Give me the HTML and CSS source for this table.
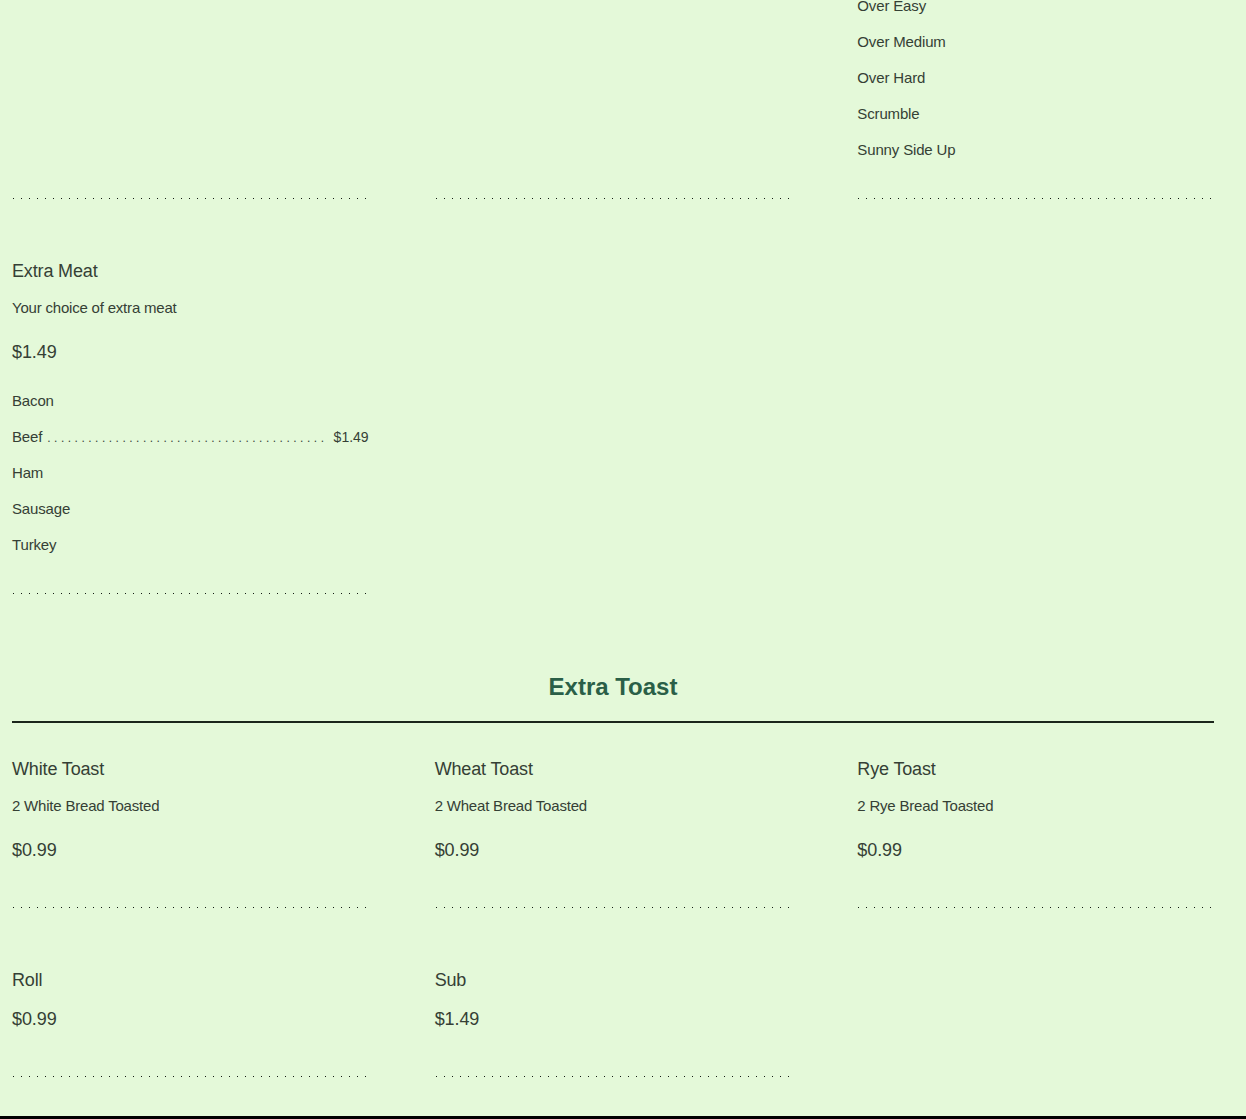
FILE: index.html
```html
<!DOCTYPE html>
<html lang="en">
<head>
<meta charset="utf-8">
<title>Menu</title>
<link rel="stylesheet" href="styles.css">
</head>
<body>
<main class="menu">
  <section class="section section-first">
    <div class="grid">
      <div class="card">
        <div class="card-body"></div>
        <div class="sep"></div>
      </div>
      <div class="card">
        <div class="card-body"></div>
        <div class="sep"></div>
      </div>
      <div class="card">
        <div class="card-body">
          <ul class="options options-top">
            <li class="opt"><span class="opt-name">Over Easy</span></li>
            <li class="opt"><span class="opt-name">Over Medium</span></li>
            <li class="opt"><span class="opt-name">Over Hard</span></li>
            <li class="opt"><span class="opt-name">Scrumble</span></li>
            <li class="opt"><span class="opt-name">Sunny Side Up</span></li>
          </ul>
        </div>
        <div class="sep"></div>
      </div>

      <div class="card">
        <div class="card-body">
          <h3 class="item-title">Extra Meat</h3>
          <p class="item-desc">Your choice of extra meat</p>
          <p class="price">$1.49</p>
          <ul class="options">
            <li class="opt"><span class="opt-name">Bacon</span></li>
            <li class="opt"><span class="opt-name">Beef</span><span class="leader"></span><span class="opt-price">$1.49</span></li>
            <li class="opt"><span class="opt-name">Ham</span></li>
            <li class="opt"><span class="opt-name">Sausage</span></li>
            <li class="opt"><span class="opt-name">Turkey</span></li>
          </ul>
        </div>
        <div class="sep"></div>
      </div>
    </div>
  </section>

  <section class="section">
    <h2 class="section-title">Extra Toast</h2>
    <div class="rule"></div>
    <div class="grid grid-toast">
      <div class="card">
        <div class="card-body">
          <h3 class="item-title">White Toast</h3>
          <p class="item-desc">2 White Bread Toasted</p>
          <p class="price">$0.99</p>
        </div>
        <div class="sep"></div>
      </div>
      <div class="card">
        <div class="card-body">
          <h3 class="item-title">Wheat Toast</h3>
          <p class="item-desc">2 Wheat Bread Toasted</p>
          <p class="price">$0.99</p>
        </div>
        <div class="sep"></div>
      </div>
      <div class="card">
        <div class="card-body">
          <h3 class="item-title">Rye Toast</h3>
          <p class="item-desc">2 Rye Bread Toasted</p>
          <p class="price">$0.99</p>
        </div>
        <div class="sep"></div>
      </div>
      <div class="card">
        <div class="card-body">
          <h3 class="item-title">Roll</h3>
          <p class="price">$0.99</p>
        </div>
        <div class="sep"></div>
      </div>
      <div class="card">
        <div class="card-body">
          <h3 class="item-title">Sub</h3>
          <p class="price">$1.49</p>
        </div>
        <div class="sep"></div>
      </div>
    </div>
  </section>
</main>
<footer class="footer"></footer>
</body>
</html>
```
FILE: styles.css
```css
html, body {
  margin: 0;
  padding: 0;
  overflow: hidden;
}

body {
  background: #e4f9d9;
  color: #354035;
  font-family: "Liberation Sans", Arial, Helvetica, sans-serif;
  height: 1119px;
  display: flex;
  flex-direction: column;
}

.menu {
  width: 1202px;
  padding: 0 32px 0 12px;
}

.section-first {
  margin-top: -12px;
}

.section + .section {
  padding-bottom: 39px;
}

.grid {
  display: grid;
  grid-template-columns: repeat(3, 1fr);
  column-gap: 66px;
  row-gap: 60px;
}

.grid-toast {
  margin-top: 34px;
}

.card {
  display: flex;
  flex-direction: column;
  min-width: 0;
}

.card-body {
  flex: 1;
}

.item-title {
  margin: 0;
  font-size: 18px;
  line-height: 24px;
  font-weight: normal;
  letter-spacing: -0.15px;
}

.item-desc {
  margin: 15px 0 0;
  font-size: 15px;
  line-height: 20px;
  letter-spacing: -0.2px;
}

.price {
  margin: 22px 0 0;
  font-size: 18px;
  line-height: 24px;
  letter-spacing: -0.1px;
}

.item-title + .price {
  margin-top: 15px;
}

.price:last-child {
  margin-bottom: 45px;
}

.options {
  list-style: none;
  margin: 19px 0 30px;
  padding: 0;
}

.options-top {
  margin-top: 0;
}

.opt {
  display: flex;
  align-items: baseline;
  font-size: 15px;
  line-height: 36px;
  height: 36px;
  letter-spacing: -0.15px;
}

.opt-name {
  flex: none;
}

.leader {
  flex: 1;
  min-width: 0;
  overflow: hidden;
  white-space: nowrap;
  font-size: 12px;
  letter-spacing: 3.5px;
  color: #3a443a;
  margin: 0 6px 0 5px;
}

.leader::before {
  content: "...................................................................................................................................................";
}

.opt-price {
  flex: none;
  font-size: 14px;
  letter-spacing: 0;
}

.sep {
  height: 1px;
  flex: none;
  background-image: linear-gradient(to right, #141a14 1px, transparent 1px);
  background-size: 8px 1px;
  background-repeat: repeat-x;
  background-position: 1px 0;
}

.section-title {
  margin: 78px 0 0;
  text-align: center;
  font-size: 24px;
  line-height: 30px;
  font-weight: bold;
  color: #2a5f47;
}

.rule {
  margin-top: 19px;
  height: 2px;
  background: #1b261b;
}

.footer {
  margin-top: auto;
  height: 3px;
  background: #000;
  flex: none;
}
```
